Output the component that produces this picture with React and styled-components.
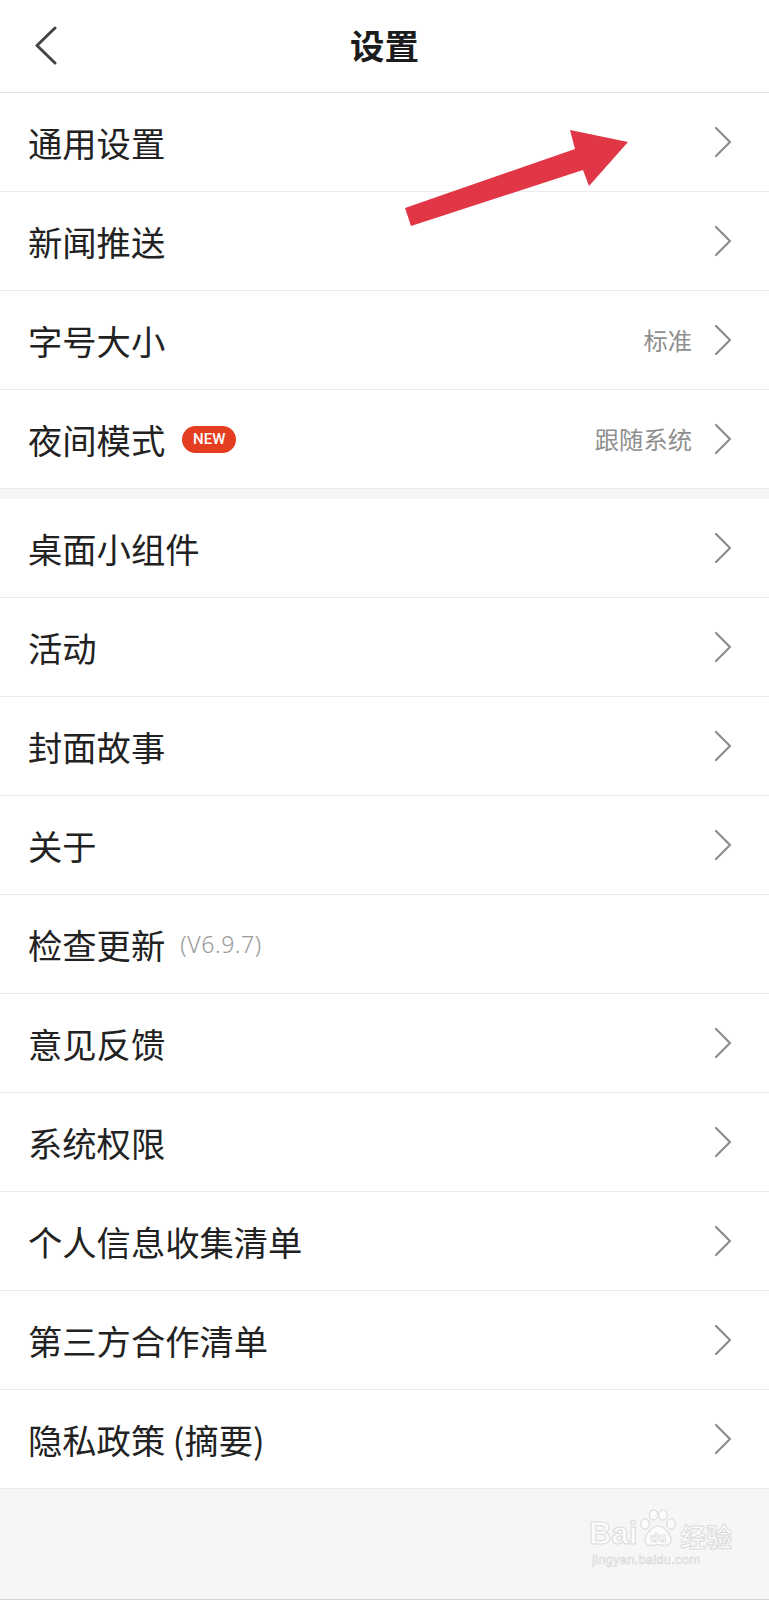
import React from "react";
import styled, { createGlobalStyle } from "styled-components";

const GlobalStyle = createGlobalStyle`
  html, body { margin: 0; padding: 0; background: #ffffff; }
  body { font-family: "Noto Sans CJK SC", "Noto Sans", sans-serif; -webkit-font-smoothing: antialiased; }
  * { box-sizing: border-box; }
`;

const Page = styled.div`
  position: relative;
  width: 769px;
  min-height: 1600px;
  display: flex;
  flex-direction: column;
  background: #ffffff;
  overflow: hidden;
`;

const Header = styled.header`
  height: 93px;
  display: grid;
  grid-template-columns: 1fr auto 1fr;
  align-items: center;
  border-bottom: 1px solid #e4e4e4;
  background: #fff;
`;

const BackButton = styled.div`
  display: flex;
  align-items: center;
  padding-left: 34px;
  height: 100%;
`;

const Title = styled.h1`
  margin: 0;
  font-size: 34.5px;
  font-weight: 700;
  color: #1c1c1c;
  line-height: 1;
  padding-bottom: 3px;
`;

const Group = styled.section`
  background: #fff;
`;

const GroupGap = styled.div`
  height: 10px;
  background: #f5f5f5;
`;

const Row = styled.div`
  height: 99px;
  display: flex;
  align-items: center;
  padding: 0 37px 0 28px;
  border-bottom: 1px solid #ececec;
`;

const Label = styled.span`
  font-size: 34.3px;
  color: #222222;
  line-height: 1;
  white-space: nowrap;
`;

const Version = styled.span`
  margin-left: 15px;
  font-size: 23px;
  color: #9a9a9a;
  font-family: "Noto Sans", "Noto Sans CJK SC", sans-serif;
  font-weight: 300;
  letter-spacing: 0.6px;
`;

const Badge = styled.span`
  margin-left: 17px;
  height: 27px;
  width: 54px;
  border-radius: 14px;
  background: #e43d1f;
  color: #fff;
  font-family: "Roboto", "Liberation Sans", Arial, sans-serif;
  font-size: 15px;
  font-weight: 500;
  display: inline-flex;
  align-items: center;
  justify-content: center;
`;

const Spacer = styled.div`
  flex: 1;
`;

const Value = styled.span`
  font-size: 24.3px;
  color: #8f8f8f;
  margin-right: 22px;
  line-height: 1;
`;

const Footer = styled.footer`
  position: relative;
  flex: 1;
  background: #f6f6f6;
  border-bottom: 1px solid #d6d6d6;
`;

const Watermark = styled.div`
  position: absolute;
  left: 589px;
  top: 20px;
  display: flex;
  flex-direction: column;
  align-items: flex-start;
  color: #fbfbfb;
  pointer-events: none;
`;

const WmTop = styled.div`
  display: flex;
  align-items: flex-end;
  font-family: "Liberation Sans", Arial, sans-serif;
  font-size: 31px;
  font-weight: 700;
  line-height: 1;
  -webkit-text-stroke: 1px #dcdcdc;
`;

const WmCn = styled.span`
  font-family: "Noto Sans CJK SC", sans-serif;
  font-size: 26px;
  margin-left: 1px;
`;

const WmUrl = styled.div`
  margin-top: 3px;
  margin-left: 3px;
  font-family: "Liberation Sans", Arial, sans-serif;
  font-size: 13px;
  letter-spacing: 0.2px;
  color: #fbfbfb;
  -webkit-text-stroke: 0.6px #d8d8d8;
`;

const Overlay = styled.svg`
  position: absolute;
  left: 0;
  top: 0;
  pointer-events: none;
`;

const Chevron = () => (
  <svg width="18" height="32" viewBox="0 0 18 32">
    <path d="M2 2 L16 16 L2 30" fill="none" stroke="#8c8c8c" strokeWidth="2.2" strokeLinecap="round" strokeLinejoin="round" />
  </svg>
);

const BackIcon = () => (
  <svg width="24" height="40" viewBox="0 0 24 40">
    <path d="M21 2 L3 19.5 L21 37" fill="none" stroke="#444" strokeWidth="3" strokeLinecap="round" strokeLinejoin="round" />
  </svg>
);

const Paw = () => (
  <svg width="42" height="40" viewBox="0 0 42 40">
    <g fill="#fbfbfb" stroke="#dcdcdc" strokeWidth="1.2">
      <ellipse cx="8" cy="15" rx="4.2" ry="5.2" />
      <ellipse cx="16.5" cy="6" rx="4.2" ry="5.2" />
      <ellipse cx="26" cy="6" rx="4.2" ry="5.2" />
      <ellipse cx="34" cy="15" rx="4.2" ry="5.2" />
      <path d="M21 17 C14 17 5 29 9 34.5 C12 38.5 17 35.5 21 35.5 C25 35.5 30 38.5 33 34.5 C37 29 28 17 21 17 Z" />
    </g>
    <text x="21" y="32.5" textAnchor="middle" fontFamily="Liberation Sans, Arial, sans-serif" fontWeight="700" fontSize="13" fill="#fbfbfb" stroke="#d6d6d6" strokeWidth="0.6">du</text>
  </svg>
);

const group1 = [
  { label: "通用设置" },
  { label: "新闻推送" },
  { label: "字号大小", value: "标准" },
  { label: "夜间模式", badge: "NEW", value: "跟随系统" },
];

const group2 = [
  { label: "桌面小组件" },
  { label: "活动" },
  { label: "封面故事" },
  { label: "关于" },
  { label: "检查更新", version: "(V6.9.7)", noArrow: true },
  { label: "意见反馈" },
  { label: "系统权限" },
  { label: "个人信息收集清单" },
  { label: "第三方合作清单" },
  { label: "隐私政策 (摘要)" },
];

const SettingRow = ({ item }) => (
  <Row>
    <Label>{item.label}</Label>
    {item.version && <Version>{item.version}</Version>}
    {item.badge && <Badge>{item.badge}</Badge>}
    <Spacer />
    {item.value && <Value>{item.value}</Value>}
    {!item.noArrow && <Chevron />}
  </Row>
);

export default function App() {
  return (
    <>
      <GlobalStyle />
      <Page>
        <Header>
          <BackButton>
            <BackIcon />
          </BackButton>
          <Title>设置</Title>
          <div />
        </Header>
        <Group>
          {group1.map((it) => (
            <SettingRow key={it.label} item={it} />
          ))}
        </Group>
        <GroupGap />
        <Group>
          {group2.map((it) => (
            <SettingRow key={it.label} item={it} />
          ))}
        </Group>
        <Footer>
          <Watermark>
            <WmTop>
              <span>Bai</span>
              <Paw />
              <WmCn>经验</WmCn>
            </WmTop>
            <WmUrl>jingyan.baidu.com</WmUrl>
          </Watermark>
        </Footer>
        <Overlay width="769" height="300" viewBox="0 0 769 300">
          <polygon
            points="405,208 575,149 570,130 628,142 589,186 583,170 411,226"
            fill="#e03646"
          />
        </Overlay>
      </Page>
    </>
  );
}
